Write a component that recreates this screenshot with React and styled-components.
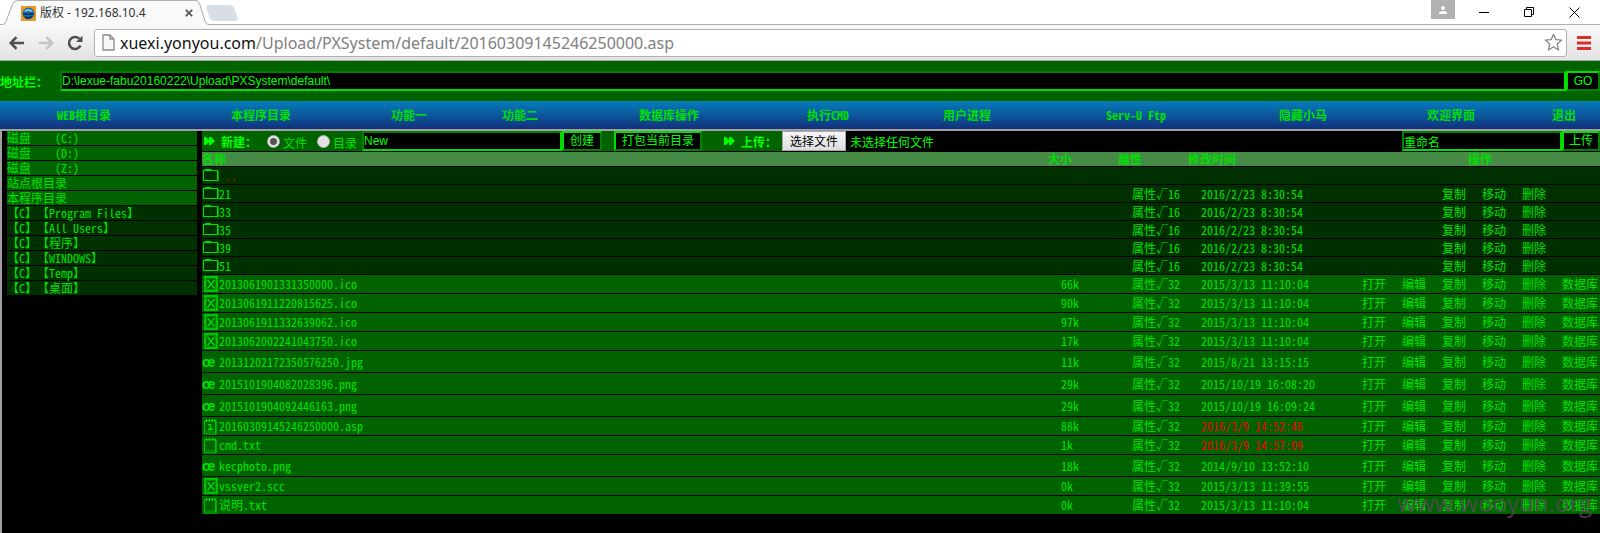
import React from "react";
import styled, { createGlobalStyle } from "styled-components";

const CJK = `"Noto Sans CJK SC", sans-serif`;
const UI = `"Liberation Sans", "Noto Sans CJK SC", sans-serif`;
const CHROME = `"Noto Sans", "Noto Sans CJK SC", sans-serif`;
const LIME = "#00e000";
const GREEN = "#006300";
const DARK = "#003000";
const BEVEL_LIGHT = "#00dd00";
const BEVEL_DARK = "#008200";

const GlobalStyle = createGlobalStyle`
  *, *::before, *::after { box-sizing: border-box; }
  html, body { margin: 0; padding: 0; background: #000; }
  body {
    font-family: ${CJK};
    font-size: 12px;
    font-feature-settings: "hwid" 1;
    text-spacing-trim: space-all;
    color: ${LIME};
  }
  a { color: inherit; text-decoration: none; }
  button, input { font-family: ${UI}; font-size: inherit; margin: 0; }
  svg { display: block; flex: none; }
`;

const Window = styled.div`
  position: relative;
  display: flex;
  flex-direction: column;
  min-height: 100vh;
`;

/* ---------- browser chrome ---------- */

const TabStrip = styled.header`
  display: flex;
  height: 25px;
  padding-left: 2px;
  background: #fff;
  box-shadow: inset 0 -1px #b0b0b0;
  color: #333;
  font-feature-settings: normal;
`;

const Tab = styled.div`
  display: flex;
  align-items: center;
  gap: 4px;
  width: 178px;
  height: 25px;
  padding: 0 3px;
  background: #f9f9f9;
  border-top: 1px solid #b0b0b0;
`;

const TabTitle = styled.span`
  flex: 1;
  white-space: nowrap;
  font: 12px/18px ${CHROME};
`;

const PlainButton = styled.button`
  display: flex;
  align-items: center;
  justify-content: center;
  padding: 0;
  border: 0;
  background: none;
  color: inherit;
`;

const NewTab = styled.button`
  width: 28px;
  height: 16px;
  margin-top: 5px;
  padding: 0;
  border: 0;
  border-radius: 4px;
  background: #d8dee6;
  transform: skewX(20deg);
`;

const WindowControls = styled.div`
  display: flex;
  margin-left: auto;
  padding-right: 8px;
  color: #000;
`;

const UserBadge = styled(PlainButton)`
  width: 24px;
  height: 19px;
  margin-right: 2px;
  background: #b1b1b1;
`;

const ControlButton = styled(PlainButton)`
  width: 45px;
  height: 25px;
  padding-left: 10px;
`;

const BrowserBar = styled.div`
  display: flex;
  align-items: center;
  gap: 10px;
  height: 36px;
  padding: 0 9px 0 8px;
  background: linear-gradient(#f9f9f9, #e2e2e2);
  border-bottom: 1px solid #a4a4a4;
  font-feature-settings: normal;
`;

const NavButtons = styled.div`
  display: flex;
  gap: 11px;
`;

const Omnibox = styled.div`
  flex: 1;
  display: flex;
  align-items: center;
  height: 28px;
  padding: 0 3px 0 7px;
  background: #fff;
  border: 1px solid #b2b2b2;
  border-radius: 3px;
`;

const Url = styled.div`
  flex: 1;
  padding-left: 5px;
  color: #808080;
  font: 16px/24px ${CHROME};
  white-space: nowrap;
`;

const Host = styled.span`
  color: #111;
`;

/* ---------- page ---------- */

const Field = styled.input`
  height: 20px;
  padding: 0;
  background: #000;
  color: #00ff00;
  border: 2px solid;
  border-color: ${BEVEL_DARK} ${BEVEL_LIGHT} ${BEVEL_LIGHT} ${BEVEL_DARK};
  border-radius: 0;
  outline: 0;
  width: ${(p) => p.$width || "auto"};
  flex: ${(p) => (p.$grow ? 1 : "none")};
`;

const BevelButton = styled.button`
  height: 20px;
  width: ${(p) => p.$width};
  padding: 0;
  background: #000;
  color: #00ff00;
  border: 2px solid;
  border-color: ${BEVEL_LIGHT} ${BEVEL_DARK} ${BEVEL_DARK} ${BEVEL_LIGHT};
  line-height: 16px;
  white-space: nowrap;
`;

const AddressForm = styled.form`
  display: flex;
  align-items: center;
  height: 40px;
  background: ${GREEN};
`;

const AddressLabel = styled.label`
  width: 60px;
  color: #00ff00;
  font-weight: bold;
`;

const Menu = styled.nav`
  display: grid;
  grid-template-columns: 168fr 186fr 110fr 112fr 186fr 132fr 146fr 192fr 142fr 154fr 72fr;
  height: 30px;
  line-height: 28px;
  background: linear-gradient(#057dbc, #12317b);
  border-bottom: 2px solid #a0a0a0;
  text-align: center;
  font-weight: bold;
`;

const Body = styled.div`
  flex: 1;
  display: flex;
  gap: 5px;
  border-left: 2px solid #a0a0a0;
  padding-left: 5px;
`;

const Sidebar = styled.aside`
  display: flex;
  flex-direction: column;
  gap: 1px;
  width: 190px;
  flex: none;
`;

const SideLink = styled.a`
  height: 14px;
  line-height: 14px;
  white-space: pre;
  background: ${(p) => (p.$dark ? DARK : GREEN)};
`;

const Main = styled.main`
  flex: 1;
  min-width: 0;
`;

const ActionBar = styled.div`
  display: flex;
  align-items: center;
  height: 21px;
  border-bottom: 1px solid #000;
  background: #000;
`;

const ActionGroup = styled.form`
  display: flex;
  align-items: center;
  height: 20px;
  background: ${GREEN};
  flex: ${(p) => (p.$grow ? 1 : "none")};
  padding-left: ${(p) => p.$pad || "0"};
`;

const GroupTitle = styled.span`
  display: flex;
  align-items: center;
  gap: 6px;
  width: ${(p) => p.$width};
  color: #00ff00;
  font-weight: bold;
`;

const RadioLabel = styled.label`
  display: flex;
  align-items: center;
  gap: 3px;
  width: ${(p) => p.$width};
  line-height: 16px;
  white-space: nowrap;
`;

const RadioText = styled.span`
  padding-top: 4px;
`;

const Radio = styled.input`
  appearance: none;
  width: 13px;
  height: 13px;
  border: 1px solid #b4b4b4;
  border-radius: 50%;
  background: #e2e2e2;
  &:checked {
    background: radial-gradient(circle, #555 0 3px, #e2e2e2 4px);
  }
`;

const FilePicker = styled.label`
  flex: 1;
  display: flex;
  align-items: center;
  gap: 4px;
  height: 20px;
  background: #000;
  color: #00ff00;
`;

const HiddenFile = styled.input`
  position: absolute;
  width: 1px;
  height: 1px;
  opacity: 0;
`;

const PickerFace = styled.span`
  width: 64px;
  height: 20px;
  border: 1px solid #a6a6a6;
  background: linear-gradient(#f6f6f6, #dddddd);
  color: #000;
  text-align: center;
  line-height: 18px;
`;

const FileTable = styled.table`
  width: 100%;
  table-layout: fixed;
  border-collapse: separate;
  border-spacing: 0;
`;

const Col = styled.col`
  width: ${(p) => p.$width};
`;

const Head = styled.th`
  height: 15px;
  padding: 0;
  line-height: 14px;
  background: #468c46;
  border-bottom: 1px solid #000;
  text-align: ${(p) => (p.$center ? "center" : "left")};
`;

const Row = styled.tr`
  height: ${(p) => p.$height}px;
  background: ${(p) => (p.$dark ? DARK : GREEN)};
`;

const Cell = styled.td`
  padding: 0 0 0 ${(p) => p.$pad || "0"};
  border-bottom: 1px solid #000;
  line-height: 14px;
  white-space: nowrap;
  color: ${(p) => (p.$hot ? "#f00000" : LIME)};
`;

const FileName = styled.a`
  display: flex;
  align-items: center;
  height: 14px;
`;

const IconBox = styled.span`
  display: flex;
  align-items: center;
  width: 17px;
  flex: none;
`;

const ImageGlyph = styled.span`
  font: bold 14px/16px "Liberation Sans", sans-serif;
`;

const Parent = styled.span`
  padding-left: 6px;
  color: #d00000;
`;

const Ops = styled.div`
  display: grid;
  grid-template-columns: repeat(6, 40px);
`;

const Op = styled.a`
  padding-left: 2px;
  grid-column: ${(p) => p.$col};
`;

const Watermark = styled.div`
  position: absolute;
  right: 8px;
  bottom: 12px;
  color: rgba(88, 72, 88, 0.85);
  font: 24px/36px "Open Sans", sans-serif;
  font-feature-settings: normal;
  pointer-events: none;
`;

/* ---------- icons ---------- */

const Forward = () => (
  <svg width="11" height="10" viewBox="0 0 11 10" fill="#00ff00">
    <path d="M0 1h2l4 4-4 4H0V1zM5 1h2l4 4-4 4H5V1z" />
  </svg>
);

const Folder = () => (
  <svg width="17" height="13" viewBox="0 0 17 13" shapeRendering="crispEdges">
    <path d="M3 1.5V.5h5v1" fill="none" stroke={LIME} />
    <path d="M1.5 1.5H15.5V11.5H1.5z" fill="none" stroke={LIME} />
    <path d="M16.5 2v10" stroke="#00a000" />
  </svg>
);

const Unknown = () => (
  <svg width="17" height="16" viewBox="0 0 17 16">
    <path d="M3 1h12v14H3z" fill="#007000" stroke="#00c400" strokeWidth="2" />
    <path d="M4.5 2.500h9v11h-9z" fill="#005a00" stroke="#008c00" />
    <path d="M5.500 4l7 8.500M12.500 4l-7 8.500" stroke={LIME} strokeWidth="1.300" />
    <path d="M2 4h1M2 12h1M15 4h1M15 12h1" stroke="#006300" />
  </svg>
);

const Note = ({ mark }) => (
  <svg width="17" height="17" viewBox="0 0 17 17">
    <path d="M2.500 2.500h11v13.500h-11z" fill="none" stroke="#00c000" />
    <path d="M14.500 3v13M3 14h10" stroke="#00a800" />
    <path d="M4.500 1v3M7.500 1v3M10.500 1v3M13 1v3" stroke={LIME} />
    {mark && <path d="M6 6.700h2.500v5M6 11.500h5" fill="none" stroke={LIME} strokeWidth="1.500" />}
  </svg>
);

const TabEdge = () => (
  <svg width="16" height="25" viewBox="0 0 16 25">
    <path d="M0 24.500q3 0 4-3L10.500 4q1.500-3.500 5.500-3.500V25H0z" fill="#f9f9f9" />
    <path d="M0 24.500q3 0 4-3L10.500 4q1.500-3.500 5.500-3.500" fill="none" stroke="#aaa" />
  </svg>
);

const TabEdgeRight = () => (
  <svg width="12" height="25" viewBox="0 0 12 25">
    <path d="M0 .5q2.500 0 3.500 3L9 21q1 3 3 3.500V25H0z" fill="#f9f9f9" />
    <path d="M0 .5q2.500 0 3.500 3L9 21q1 3 3 3.500" fill="none" stroke="#aaa" />
  </svg>
);

const Favicon = () => (
  <svg width="15" height="15" viewBox="0 0 15 15">
    <path d="M0 0h15v15H0z" fill="#f09818" />
    <circle cx="7.500" cy="7.500" r="6" fill="#1b6ca8" />
    <path d="M3 5q4-4 9 0l-2 1q-3-2-5 0z" fill="#7cc4ee" />
    <path d="M2 8h11M4 11q4 2 7-1" stroke="#0b3354" strokeWidth="1.500" fill="none" />
  </svg>
);

const Arrow = ({ flip, color }) => (
  <svg width="18" height="16" viewBox="0 0 18 16">
    <path
      d={flip ? "M2 8h13M9.500 2.200L15.300 8l-5.800 5.800" : "M16 8H3M8.500 2.200L2.700 8l5.800 5.800"}
      fill="none"
      stroke={color}
      strokeWidth="2.600"
    />
  </svg>
);

const Reload = () => (
  <svg width="18" height="18" viewBox="0 0 18 18">
    <path d="M14.500 11.500a6 6 0 1 1-1.200-6.800" fill="none" stroke="#505050" strokeWidth="2.600" />
    <path d="M16.500 1.500V8H10z" fill="#505050" />
  </svg>
);

const PageIcon = () => (
  <svg width="13" height="17" viewBox="0 0 13 17">
    <path d="M1 1h7l4 4v11H1z" fill="#f8f8f8" stroke="#8c8c8c" strokeWidth="1.300" />
    <path d="M8 1v4h4" fill="none" stroke="#8c8c8c" strokeWidth="1.300" />
  </svg>
);

const Star = () => (
  <svg width="19" height="19" viewBox="0 0 19 19">
    <path
      d="M9.500 1.200l2.300 5.400 5.900.5-4.500 3.900 1.400 5.900-5.100-3.100-5.100 3.100 1.400-5.900L1.300 7.100l5.900-.5z"
      fill="none"
      stroke="#808080"
      strokeWidth="1.200"
      strokeLinejoin="round"
    />
  </svg>
);

const MenuBars = () => (
  <svg width="14" height="14" viewBox="0 0 14 14">
    <path d="M0 1.500h14M0 7h14M0 12.500h14" stroke="#dc2d27" strokeWidth="3" />
  </svg>
);

/* ---------- data ---------- */

const menuItems = ["WEB根目录", "本程序目录", "功能一", "功能二", "数据库操作", "执行CMD", "用户进程", "Serv-U Ftp", "隐藏小马", "欢迎界面", "退出"];

const sideItems = [
  ["磁盘    (C:)"],
  ["磁盘    (D:)"],
  ["磁盘    (Z:)"],
  ["站点根目录"],
  ["本程序目录"],
  ["【C】【Program Files】", true],
  ["【C】【All Users】", true],
  ["【C】【程序】", true],
  ["【C】【WINDOWS】", true],
  ["【C】【Temp】", true],
  ["【C】【桌面】", true],
];

const folders = ["21", "33", "35", "39", "51"];

const files = [
  ["unknown", "2013061901331350000.ico", "66k", "2015/3/13 11:10:04"],
  ["unknown", "2013061911220815625.ico", "90k", "2015/3/13 11:10:04"],
  ["unknown", "2013061911332639062.ico", "97k", "2015/3/13 11:10:04"],
  ["unknown", "2013062002241043750.ico", "17k", "2015/3/13 11:10:04"],
  ["image", "20131202172350576250.jpg", "11k", "2015/8/21 13:15:15"],
  ["image", "2015101904082028396.png", "29k", "2015/10/19 16:08:20"],
  ["image", "2015101904092446163.png", "29k", "2015/10/19 16:09:24"],
  ["script", "20160309145246250000.asp", "88k", "2016/3/9 14:52:46", true],
  ["text", "cmd.txt", "1k", "2016/3/9 14:57:09", true],
  ["image", "kecphoto.png", "18k", "2014/9/10 13:52:10"],
  ["unknown", "vssver2.scc", "0k", "2015/3/13 11:39:55"],
  ["text", "说明.txt", "0k", "2015/3/13 11:10:04"],
];

const fileIcons = {
  unknown: <Unknown />,
  image: <ImageGlyph>œ</ImageGlyph>,
  script: <Note mark />,
  text: <Note />,
};

const operations = ["打开", "编辑", "复制", "移动", "删除", "数据库"];

const Operations = ({ from, to }) => (
  <Ops>
    {operations.slice(from, to).map((name, i) => (
      <Op key={name} href="#" $col={from + i + 1}>{name}</Op>
    ))}
  </Ops>
);

export default function App() {
  return (
    <Window>
      <GlobalStyle />
      <TabStrip>
        <TabEdge />
        <Tab>
          <Favicon />
          <TabTitle>版权 - 192.168.10.4</TabTitle>
          <PlainButton aria-label="关闭标签页">
            <svg width="8" height="8" viewBox="0 0 8 8">
              <path d="M.8.8l6.400 6.400M7.200.8L.8 7.200" stroke="#555" strokeWidth="1.700" />
            </svg>
          </PlainButton>
        </Tab>
        <TabEdgeRight />
        <NewTab aria-label="新标签页" />
        <WindowControls>
          <UserBadge aria-label="用户">
            <svg width="8" height="8" viewBox="0 0 8 8" fill="#fff">
              <circle cx="4" cy="2" r="2" />
              <path d="M0 8V6.500Q1 5 4 5t4 1.500V8z" />
            </svg>
          </UserBadge>
          <ControlButton aria-label="最小化">
            <svg width="11" height="11" viewBox="0 0 11 11"><path d="M0 5.500h10" stroke="#000" /></svg>
          </ControlButton>
          <ControlButton aria-label="还原">
            <svg width="11" height="11" viewBox="0 0 11 11">
              <path d="M.5 2.500h7v7h-7zM2.500 2.500v-2h7v7h-2" fill="none" stroke="#000" />
            </svg>
          </ControlButton>
          <ControlButton aria-label="关闭">
            <svg width="11" height="11" viewBox="0 0 11 11"><path d="M.5.5l10 10M10.500.5l-10 10" stroke="#000" /></svg>
          </ControlButton>
        </WindowControls>
      </TabStrip>
      <BrowserBar>
        <NavButtons>
          <PlainButton aria-label="后退"><Arrow color="#505050" /></PlainButton>
          <PlainButton aria-label="前进"><Arrow flip color="#c4c4c4" /></PlainButton>
          <PlainButton aria-label="重新加载"><Reload /></PlainButton>
        </NavButtons>
        <Omnibox>
          <PageIcon />
          <Url><Host>xuexi.yonyou.com</Host>/Upload/PXSystem/default/20160309145246250000.asp</Url>
          <PlainButton aria-label="收藏"><Star /></PlainButton>
        </Omnibox>
        <PlainButton aria-label="菜单"><MenuBars /></PlainButton>
      </BrowserBar>

      <AddressForm>
        <AddressLabel htmlFor="path">地址栏：</AddressLabel>
        <Field id="path" $grow defaultValue="D:\lexue-fabu20160222\Upload\PXSystem\default\" />
        <BevelButton type="button" $width="34px">GO</BevelButton>
      </AddressForm>
      <Menu>
        {menuItems.map((item) => (
          <a key={item} href="#">{item}</a>
        ))}
      </Menu>

      <Body>
        <Sidebar>
          {sideItems.map(([label, dark]) => (
            <SideLink key={label} href="#" $dark={dark}>{label}</SideLink>
          ))}
        </Sidebar>
        <Main>
          <ActionBar>
            <ActionGroup $pad="2px">
              <GroupTitle $width="63px"><Forward />新建：</GroupTitle>
              <RadioLabel $width="50px"><Radio type="radio" name="kind" defaultChecked /><RadioText>文件</RadioText></RadioLabel>
              <RadioLabel $width="45px"><Radio type="radio" name="kind" /><RadioText>目录</RadioText></RadioLabel>
              <Field aria-label="新建名称" $width="200px" defaultValue="New" />
              <BevelButton type="button" $width="40px">创建</BevelButton>
            </ActionGroup>
            <ActionGroup $pad="12px">
              <BevelButton type="button" $width="88px">打包当前目录</BevelButton>
            </ActionGroup>
            <ActionGroup $grow $pad="22px">
              <GroupTitle $width="58px"><Forward />上传：</GroupTitle>
              <FilePicker>
                <HiddenFile type="file" />
                <PickerFace>选择文件</PickerFace>
                未选择任何文件
              </FilePicker>
              <Field aria-label="重命名" $width="160px" defaultValue="重命名" />
              <BevelButton type="button" $width="38px">上传</BevelButton>
            </ActionGroup>
          </ActionBar>
          <FileTable>
            <colgroup>
              <Col />
              <Col $width="70px" />
              <Col $width="70px" />
              <Col $width="172px" />
              <Col $width="240px" />
            </colgroup>
            <thead>
              <tr>
                <Head>名称</Head>
                <Head>大小</Head>
                <Head>属性</Head>
                <Head>修改时间</Head>
                <Head $center>操作</Head>
              </tr>
            </thead>
            <tbody>
              <Row $dark $height={18}>
                <Cell colSpan={5}>
                  <FileName href="#"><IconBox><Folder /></IconBox><Parent>..</Parent></FileName>
                </Cell>
              </Row>
              {folders.map((name) => (
                <Row key={name} $dark $height={18}>
                  <Cell><FileName href="#"><IconBox><Folder /></IconBox>{name}</FileName></Cell>
                  <Cell />
                  <Cell $pad="14px">属性√16</Cell>
                  <Cell $pad="13px">2016/2/23 8:30:54</Cell>
                  <Cell><Operations from={2} to={5} /></Cell>
                </Row>
              ))}
              {files.map(([kind, name, size, time, hot]) => (
                <Row key={name} $height={kind === "image" ? 22 : 19}>
                  <Cell><FileName href="#"><IconBox>{fileIcons[kind]}</IconBox>{name}</FileName></Cell>
                  <Cell $pad="13px">{size}</Cell>
                  <Cell $pad="14px">属性√32</Cell>
                  <Cell $pad="13px" $hot={hot}>{time}</Cell>
                  <Cell><Operations from={0} to={6} /></Cell>
                </Row>
              ))}
            </tbody>
          </FileTable>
        </Main>
      </Body>
      <Watermark>www.wooyun.org</Watermark>
    </Window>
  );
}
